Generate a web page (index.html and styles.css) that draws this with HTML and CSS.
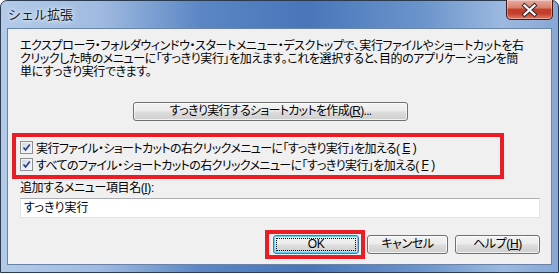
FILE: index.html
```html
<!DOCTYPE html>
<html lang="ja">
<head>
    <meta charset="UTF-8">
    <meta name="viewport" content="width=device-width, initial-scale=1.0">
    <title>シェル拡張</title>
    <link rel="stylesheet" href="styles.css">
</head>
<body>
<div class="window">
    <div class="titlebar">
        <span class="title">シェル拡張</span>
        <div class="close">
            <svg width="45" height="19" viewBox="0 0 45 19">
                <path d="M17.5 5.5 L27.5 14.5 M27.5 5.5 L17.5 14.5" stroke="#3a2a2a" stroke-width="4.2" stroke-linecap="square"/>
                <path d="M17.5 5.5 L27.5 14.5 M27.5 5.5 L17.5 14.5" stroke="#ffffff" stroke-width="2.2" stroke-linecap="square"/>
            </svg>
        </div>
    </div>
    <div class="client">
        <p class="desc">エクスプローラ・フォルダウィンドウ・スタートメニュー・デスクトップで、実行ファイルやショートカットを右<br>クリックした時のメニューに「すっきり実行」を加えます。これを選択すると、目的のアプリケーションを簡<br>単にすっきり実行できます。</p>
        <button class="btn btn-create">すっきり実行するショートカットを作成(<u>R</u>)...</button>
        <div class="mark mark-checks">
            <div class="check-row">
                <span class="check"><svg width="11" height="11" viewBox="0 0 11 11"><path d="M2.5 5.5 L4.6 8 L8.8 2.6" fill="none" stroke="#2b3f7e" stroke-width="1.7"/></svg></span>
                実行ファイル・ショートカットの右クリックメニューに「すっきり実行」を加える(<u>E</u>)
            </div>
            <div class="check-row">
                <span class="check"><svg width="11" height="11" viewBox="0 0 11 11"><path d="M2.5 5.5 L4.6 8 L8.8 2.6" fill="none" stroke="#2b3f7e" stroke-width="1.7"/></svg></span>
                すべてのファイル・ショートカットの右クリックメニューに「すっきり実行」を加える(<u>F</u>)
            </div>
        </div>
        <div class="field-label">追加するメニュー項目名(<u>I</u>):</div>
        <div class="field">すっきり実行</div>
        <div class="actions">
            <div class="mark mark-ok"><button class="btn btn-default">OK</button></div>
            <button class="btn btn-cancel">キャンセル</button>
            <button class="btn btn-help">ヘルプ(<u>H</u>)</button>
        </div>
    </div>
</div>
</body>
</html>
```

FILE: styles.css
```css
body {
    margin: 0;
    width: 560px;
    height: 274px;
    background: #ffffff;
    font-family: "Liberation Sans", "Noto Sans CJK JP", sans-serif;
    font-size: 12px;
    color: #000;
    overflow: hidden;
}
.window {
    width: 557px;
    height: 271px;
    border: 1px solid #2a3a50;
    border-radius: 7px 7px 0 0;
    background: linear-gradient(90deg, #b3cbe8 0%, #9fbae0 18%, #5a86c4 36%, #4876b9 55%, #6b95cc 76%, #9cb9df 90%, #86a8d6 100%);
    display: flex;
    flex-direction: column;
}
.titlebar {
    height: 27px;
    display: flex;
    align-items: flex-start;
}
.title {
    margin: 6px 0 0 7px;
    font-size: 13px;
    line-height: 15px;
    color: #1a1a1a;
    text-shadow: 0 0 6px rgba(255,255,255,0.9), 0 0 3px rgba(255,255,255,0.9);
}
.close {
    margin: -1px 5px 0 auto;
    width: 45px;
    height: 19px;
    border: 1px solid #4a1a18;
    border-top: none;
    border-radius: 0 0 5px 5px;
    background: linear-gradient(#e6aca2 0%, #d8816f 40%, #c2402c 50%, #c33e2a 70%, #df7a62 100%);
    box-shadow: inset 0 0 0 1px rgba(255,255,255,0.35);
    display: flex;
}
.client {
    margin: 0 6px;
    height: 237px;
    border: 1px solid #6b83a6;
    background: #f0f0f0;
    padding: 11px 10px 0 12px;
    box-sizing: border-box;
}
.client u {
    text-decoration-thickness: 1px;
    text-underline-offset: 1px;
}
.desc {
    margin: 0;
    line-height: 13px;
    font-feature-settings: "palt";
    letter-spacing: -0.4px;
    white-space: nowrap;
}
.btn {
    font-family: inherit;
    font-size: 12px;
    height: 19px;
    padding: 0;
    line-height: 15px;
    border: 1px solid #707070;
    border-radius: 3px;
    background: linear-gradient(#f3f3f3 0%, #ebebeb 48%, #dddddd 52%, #cfcfcf 100%);
    box-shadow: inset 0 0 0 1px rgba(255,255,255,0.7);
    color: #000;
    font-feature-settings: "palt";
    letter-spacing: -0.4px;
}
.btn-create {
    display: block;
    margin: 23px 0 0 113px;
    width: 275px;
    letter-spacing: -0.7px;
}
.mark {
    border: 4px solid #ec1c24;
}
.mark-checks {
    margin: 12px 0 0 -8px;
    width: 480px;
    padding: 2px 0 2px 4px;
}
.check-row {
    height: 17px;
    display: flex;
    align-items: center;
    gap: 3px;
    white-space: nowrap;
    font-feature-settings: "palt";
    letter-spacing: -0.6px;
}
.check {
    width: 11px;
    height: 11px;
    border: 1px solid #8e8f8f;
    background: linear-gradient(135deg, #cdd3e4 0%, #e9ecf4 60%, #f8f9fb 100%);
    box-shadow: inset 0 0 0 1px #f4f4f4;
    display: flex;
}
.field-label {
    margin-top: 3px;
    line-height: 13px;
    font-feature-settings: "palt";
    letter-spacing: -0.4px;
}
.field {
    margin-top: 3px;
    width: 520px;
    height: 20px;
    box-sizing: border-box;
    border: 1px solid #dfe3ea;
    border-top-color: #abadb3;
    background: #ffffff;
    padding: 0 3px;
    line-height: 18px;
    font-feature-settings: "palt";
}
.actions {
    margin-top: 12px;
    display: flex;
    align-items: center;
    justify-content: flex-end;
    padding-right: 1px;
}
.mark-ok {
    padding: 1px 2px 1px 4px;
    display: flex;
}
.btn-default {
    width: 86px;
    border-color: #3c7fb1;
    box-shadow: inset 0 0 0 1px #5fd0f5;
    outline: 1px dotted #000;
    outline-offset: -4px;
}
.btn-cancel {
    margin-left: 2px;
    width: 81px;
}
.btn-help {
    margin-left: 7px;
    width: 85px;
}
```
